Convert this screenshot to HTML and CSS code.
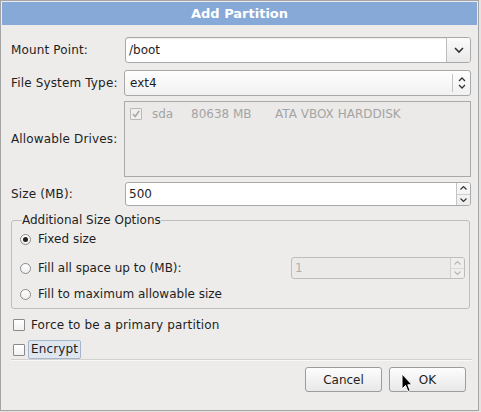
FILE: index.html
```html
<!DOCTYPE html>
<html>
<head>
<meta charset="utf-8">
<link rel="stylesheet" href="styles.css">
</head>
<body>
<div class="window">
  <div class="titlebar">Add Partition</div>
  <div class="content">
    <div class="form">
      <div class="row r1">
        <span class="label">Mount Point:</span>
        <div class="combo-entry">
          <span class="entry-text">/boot</span>
          <span class="combo-btn">
            <svg width="12" height="8" viewBox="0 0 12 8"><path d="M2 2 L6 6 L10 2" fill="none" stroke="#333" stroke-width="1.6"/></svg>
          </span>
        </div>
      </div>
      <div class="row r2">
        <span class="label">File System Type:</span>
        <div class="combo-box">
          <span class="combo-text">ext4</span>
          <span class="combo-sep"></span>
          <span class="combo-arrows">
            <svg width="10" height="16" viewBox="0 0 10 16"><path d="M2 6 L5 3 L8 6 M2 10 L5 13 L8 10" fill="none" stroke="#333" stroke-width="1.3"/></svg>
          </span>
        </div>
      </div>
      <div class="row r3">
        <span class="label">Allowable Drives:</span>
        <div class="drives">
          <div class="drive">
            <span class="check disabled">
              <svg width="10" height="10" viewBox="0 0 10 10"><path d="M2 5 L4.2 7.5 L8.2 2" fill="none" stroke="#a6a6a6" stroke-width="1.5"/></svg>
            </span>
            <span class="d-name">sda</span>
            <span class="d-size">80638 MB</span>
            <span class="d-model">ATA VBOX HARDDISK</span>
          </div>
        </div>
      </div>
      <div class="row r4">
        <span class="label">Size (MB):</span>
        <div class="spin">
          <span class="entry-text">500</span>
          <span class="spin-btns">
            <span class="sb"><svg width="9" height="6" viewBox="0 0 9 6"><path d="M1.5 4.5 L4.5 1.5 L7.5 4.5" fill="none" stroke="#333" stroke-width="1.2"/></svg></span>
            <span class="sb"><svg width="9" height="6" viewBox="0 0 9 6"><path d="M1.5 1.5 L4.5 4.5 L7.5 1.5" fill="none" stroke="#333" stroke-width="1.2"/></svg></span>
          </span>
        </div>
      </div>
    </div>

    <fieldset class="frame">
      <legend>Additional Size Options</legend>
      <div class="opt o1">
        <span class="radio on"></span><span>Fixed size</span>
      </div>
      <div class="opt o2">
        <span class="radio"></span><span class="grow">Fill all space up to (MB):</span>
        <div class="spin small disabled">
          <span class="entry-text">1</span>
          <span class="spin-btns">
            <span class="sb"><svg width="9" height="6" viewBox="0 0 9 6"><path d="M1.5 4.5 L4.5 1.5 L7.5 4.5" fill="none" stroke="#b5b5b5" stroke-width="1.1"/></svg></span>
            <span class="sb"><svg width="9" height="6" viewBox="0 0 9 6"><path d="M1.5 1.5 L4.5 4.5 L7.5 1.5" fill="none" stroke="#b5b5b5" stroke-width="1.1"/></svg></span>
          </span>
        </div>
      </div>
      <div class="opt o3">
        <span class="radio"></span><span>Fill to maximum allowable size</span>
      </div>
    </fieldset>

    <div class="cb cb1"><span class="check"></span><span class="cb-text">Force to be a primary partition</span></div>
    <div class="cb cb2"><span class="check"></span><span class="cb-text focus">Encrypt</span></div>

    <div class="sep"></div>

    <div class="buttons">
      <button class="btn">Cancel</button>
      <button class="btn">OK</button>
    </div>
  </div>
  <svg class="cursor" width="12" height="20" viewBox="0 0 12 20"><path d="M1 1 L1 16 L4.5 12.5 L7 18.5 L9.2 17.5 L6.8 11.8 L11 11.8 Z" fill="#000" stroke="#fff" stroke-width="1"/></svg>
</div>
</body>
</html>
```

FILE: styles.css
```css
* { box-sizing: border-box; }
html, body { margin: 0; padding: 0; }
body {
  width: 481px;
  height: 412px;
  overflow: hidden;
  background: #e4e3e2;
  font-family: "DejaVu Sans", sans-serif;
  font-size: 12px;
  color: #1e1e1e;
}
.window {
  position: relative;
  width: 479px;
  height: 411px;
  border: 1px solid #a4a4a4;
  padding: 1px;
  background: #edeceb;
  display: flex;
  flex-direction: column;
}
.titlebar {
  flex: none;
  height: 23px;
  background: #86a9d8;
  color: #fff;
  font-weight: bold;
  font-size: 13px;
  display: flex;
  align-items: center;
  justify-content: center;
}
.content {
  padding: 12px 6px 0 9px;
  display: flex;
  flex-direction: column;
}
.form { display: flex; flex-direction: column; }
.row { display: flex; align-items: center; }
.label { width: 113px; flex: none; letter-spacing: 0.15px; }
.r1 { height: 26px; }
.r2 { height: 26px; margin-top: 7px; }
.r3 { height: 76px; margin-top: 5px; }
.r4 { height: 24px; margin-top: 5px; }

.combo-entry {
  flex: 1;
  height: 26px;
  margin-left: 1px;
  border: 1px solid #a9a9a9;
  border-radius: 3px;
  background: #fff;
  display: flex;
  align-items: center;
  overflow: hidden;
  box-shadow: inset 0 1px 1px rgba(0,0,0,0.08);
}
.entry-text { flex: 1; padding-left: 3px; }
.combo-btn {
  width: 24px;
  height: 100%;
  border-left: 1px solid #bdbdbd;
  background: linear-gradient(#fbfbfb, #e9e9e9);
  display: flex;
  align-items: center;
  justify-content: center;
}
.combo-box {
  flex: 1;
  height: 26px;
  border: 1px solid #a9a9a9;
  border-radius: 3px;
  background: linear-gradient(#fefefe, #f1f1f1);
  display: flex;
  align-items: center;
}
.combo-text { flex: 1; padding-left: 5px; }
.combo-sep { width: 1px; height: 18px; background: #c4c4c4; }
.combo-arrows { width: 17px; display: flex; justify-content: center; align-items: center; }

.drives {
  flex: 1;
  height: 76px;
  border: 1px solid #a9a9a9;
  background: #ebeae9;
  padding: 5px 0 0 5px;
  align-self: stretch;
}
.drive { display: flex; align-items: center; color: #a4a4a4; }
.check {
  width: 12px;
  height: 12px;
  border: 1px solid #8a8a8a;
  border-radius: 1px;
  background: linear-gradient(#ffffff, #f1f1f1);
  display: inline-flex;
  align-items: center;
  justify-content: center;
  flex: none;
}
.check.disabled { border-color: #b9b9b9; background: #f0efee; }
.d-name { margin-left: 10px; width: 39px; }
.d-size { width: 84px; }

.spin {
  flex: 1;
  height: 24px;
  margin-left: 1px;
  border: 1px solid #a9a9a9;
  border-radius: 3px;
  background: #fff;
  display: flex;
  align-items: center;
  overflow: hidden;
}
.spin-btns {
  width: 14px;
  height: 100%;
  border-left: 1px solid #c4c4c4;
  display: flex;
  flex-direction: column;
  background: linear-gradient(#fafafa, #ececec);
}
.sb { flex: 1; display: flex; align-items: center; justify-content: center; }
.sb + .sb { border-top: 1px solid #cfcfcf; }

.frame {
  margin: 7px 0 0 0;
  width: 459px;
  border: 1px solid #bdbdbd;
  border-radius: 3px;
  padding: 2px 4px 4px 8px;
  min-width: 0;
}
.frame legend {
  padding: 0;
  margin-left: 2px;
  line-height: 14px;
}
.opt { display: flex; align-items: center; }
.o1 { height: 20px; }
.o2 { height: 22px; margin-top: 8px; }
.o3 { height: 20px; margin-top: 5px; }
.radio {
  width: 11px;
  height: 11px;
  border: 1px solid #8a8a8a;
  border-radius: 50%;
  background: linear-gradient(#ffffff, #eeeeee);
  margin-right: 7px;
  flex: none;
  display: inline-flex;
  align-items: center;
  justify-content: center;
}
.radio.on::after {
  content: "";
  width: 5px;
  height: 5px;
  border-radius: 50%;
  background: #222;
}
.grow { flex: 1; }
.spin.small { flex: none; width: 174px; height: 22px; }
.spin.disabled { background: #ebeae9; border-color: #bdbdbd; color: #b0b0b0; }
.spin.disabled .spin-btns { background: #efeeed; border-left-color: #d0d0d0; }
.spin.disabled .sb + .sb { border-top-color: #d8d8d8; }

.cb { display: flex; align-items: center; padding-left: 2px; }
.cb .check { margin-right: 5px; }
.cb1 { height: 18px; margin-top: 7px; }
.cb2 { height: 19px; margin-top: 6px; }
.cb-text { padding: 0 1px; letter-spacing: 0.15px; }
.cb-text.focus {
  border: 1px solid #a5b5cc;
  border-radius: 2px;
  background: #dfe6f0;
  height: 19px;
  line-height: 17px;
  margin-left: -2px;
  padding: 0 2px;
}

.sep {
  height: 2px;
  margin: 0;
  width: 461px;
  border-top: 1px solid #d2d1d0;
  border-bottom: 1px solid #f8f8f8;
}
.buttons {
  display: flex;
  justify-content: flex-end;
  gap: 7px;
  margin-top: 6px;
  padding-right: 5px;
}
.btn {
  width: 77px;
  height: 25px;
  font-family: inherit;
  font-size: 12px;
  color: #1e1e1e;
  border: 1px solid #9c9c9c;
  border-radius: 3px;
  background: linear-gradient(#fdfdfd, #e8e8e8);
  padding: 0;
}
.cursor { position: absolute; left: 400px; top: 372px; }
```
